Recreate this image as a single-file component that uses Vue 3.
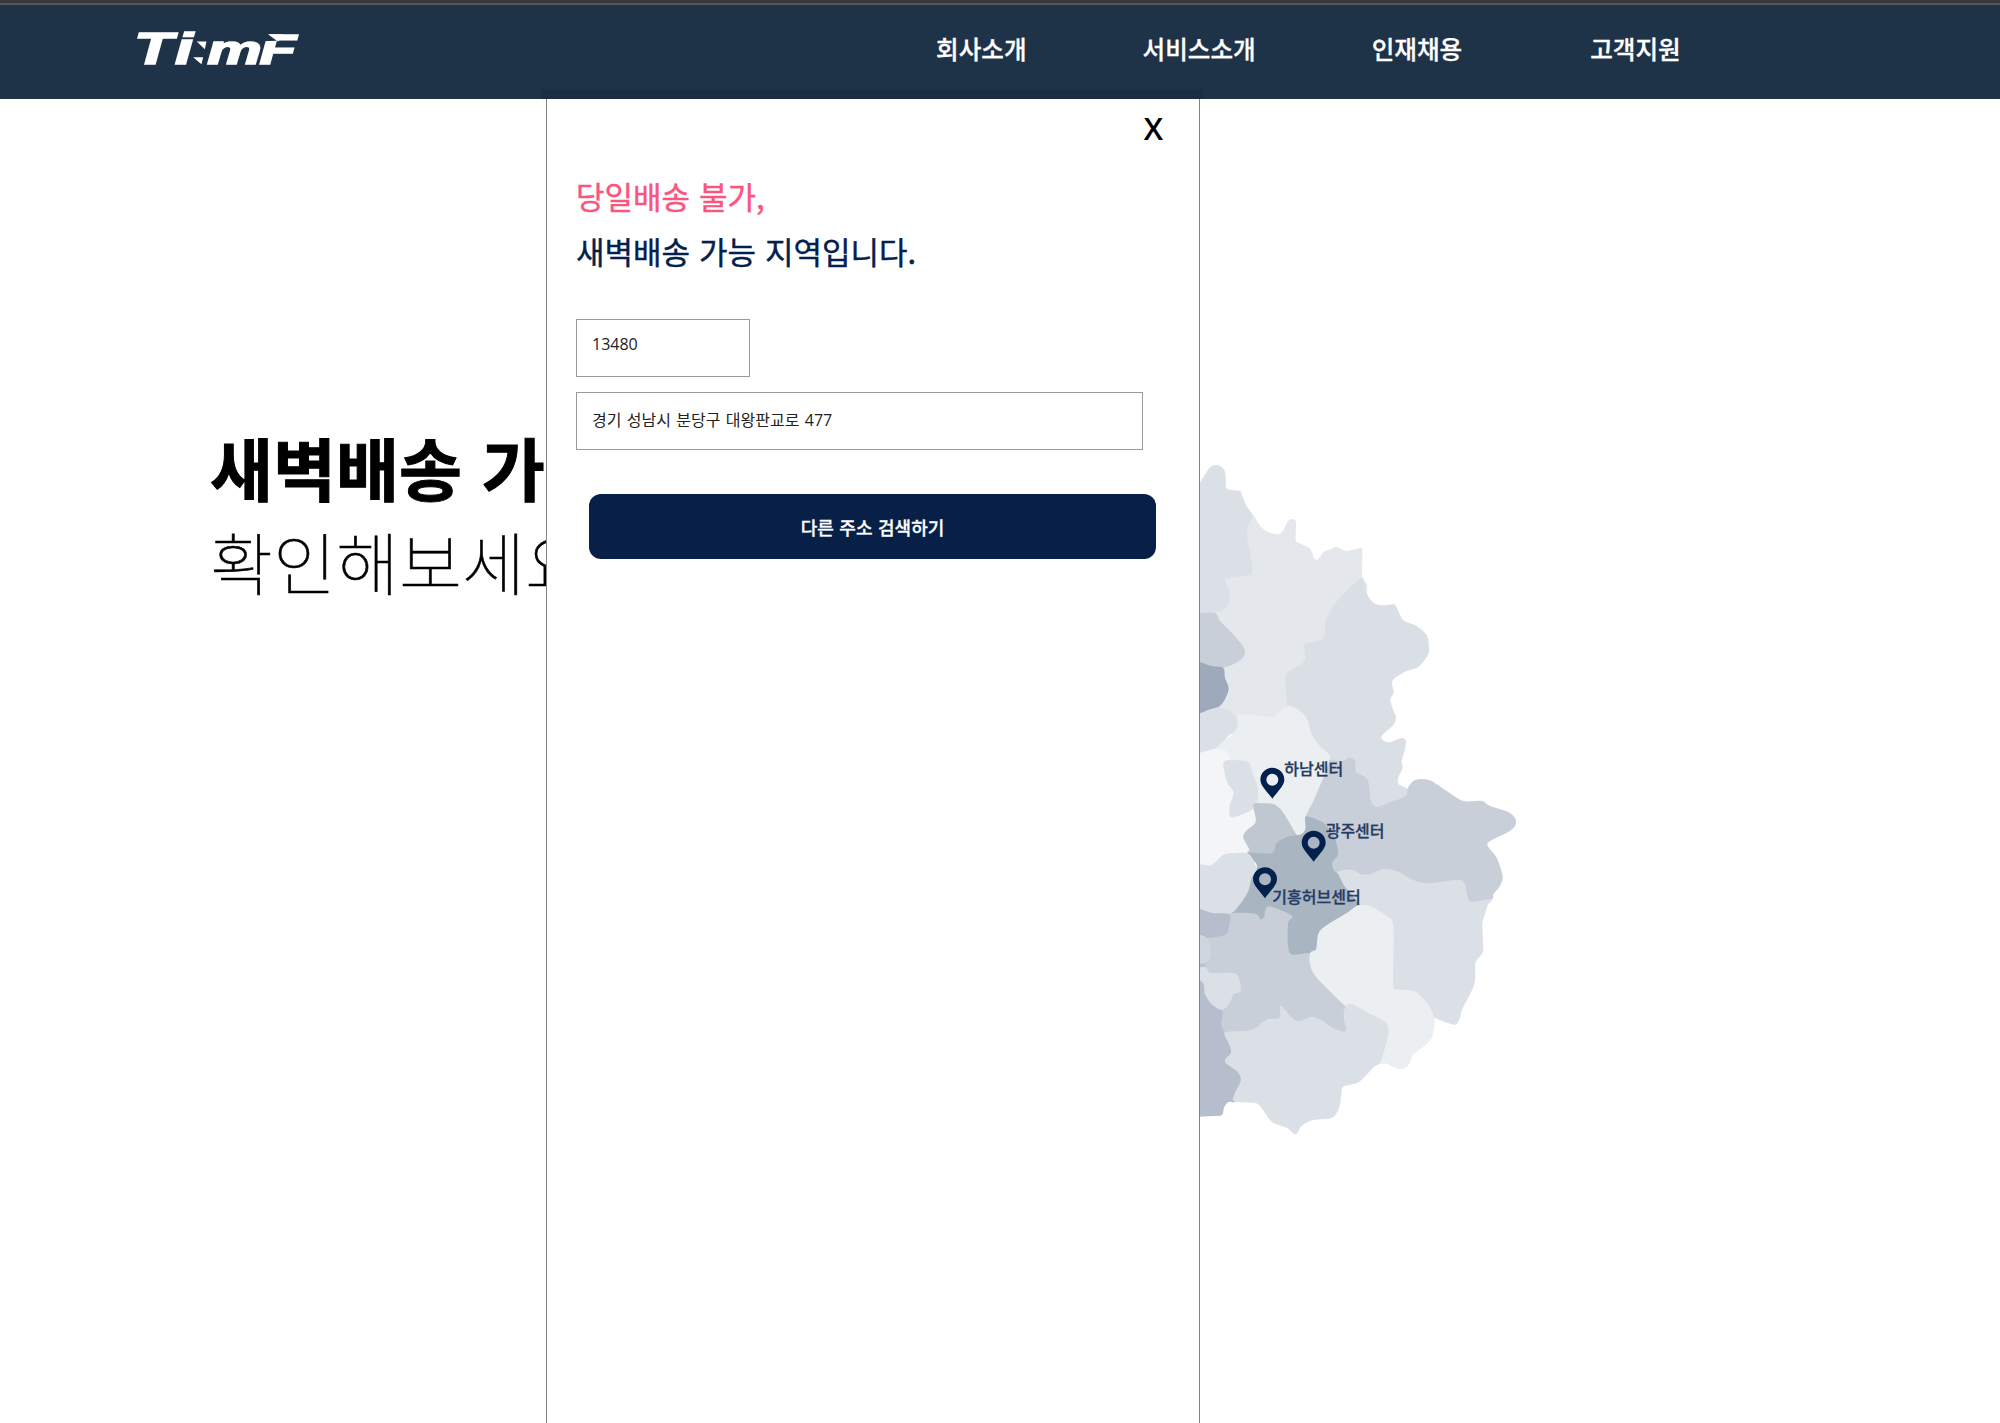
<script setup>
const menu = ['회사소개', '서비스소개', '인재채용', '고객지원']

// Closed Catmull-Rom outline through a flat list of x, y pairs
function outline(flat) {
  const p = []
  for (let i = 0; i < flat.length; i += 2) p.push([flat[i], flat[i + 1]])
  const n = p.length
  const k = 7
  let d = `M${p[0][0]} ${p[0][1]}`
  for (let i = 0; i < n; i++) {
    const a = p[(i - 1 + n) % n]
    const b = p[i]
    const c = p[(i + 1) % n]
    const e = p[(i + 2) % n]
    d += `C${(b[0] + (c[0] - a[0]) / k).toFixed(1)} ${(b[1] + (c[1] - a[1]) / k).toFixed(1)} ${(c[0] - (e[0] - b[0]) / k).toFixed(1)} ${(c[1] - (e[1] - b[1]) / k).toFixed(1)} ${c[0]} ${c[1]}`
  }
  return d + 'Z'
}

const regions = [
  { fill: '#dbe0e7', points: [20, 160, 60, 95, 78, 65, 95, 45, 115, 43, 132, 56, 137, 75, 138, 108, 148, 116, 180, 120, 187, 135, 200, 165, 222, 198, 230, 240, 230, 420, 150, 520, 20, 520] },
  { fill: '#e4e8ed', points: [220, 196, 235, 217, 250, 234, 270, 245, 295, 250, 308, 240, 325, 209, 338, 205, 348, 213, 347, 268, 358, 277, 385, 289, 397, 305, 400, 319, 409, 327, 420, 318, 432, 302, 455, 294, 468, 288, 500, 300, 540, 291, 547, 300, 547, 380, 560, 430, 480, 720, 400, 830, 100, 830, 100, 560, 104, 487, 128, 481, 147, 455, 149, 425, 136, 390, 142, 382, 205, 373, 216, 362, 214, 325, 201, 258, 204, 228] },
  { fill: '#dadfe6', points: [547, 380, 557, 420, 580, 455, 610, 463, 643, 460, 652, 475, 670, 508, 710, 525, 740, 552, 746, 580, 745, 610, 715, 648, 680, 660, 638, 688, 641, 725, 631, 745, 640, 778, 648, 800, 640, 822, 605, 855, 612, 870, 632, 873, 665, 861, 678, 870, 674, 900, 665, 930, 668, 950, 655, 980, 656, 1000, 680, 1012, 690, 1030, 640, 1110, 500, 1120, 400, 1000, 330, 820, 320, 740, 316, 685, 327, 660, 360, 642, 375, 625, 373, 583, 385, 576, 420, 568, 435, 550, 436, 515, 460, 465, 500, 420] },
  { fill: '#c8cfd9', points: [20, 480, 65, 485, 106, 487, 120, 510, 155, 545, 185, 580, 195, 600, 188, 620, 160, 640, 130, 650, 60, 660, 20, 660] },
  { fill: '#9eaabb', points: [20, 625, 60, 634, 95, 645, 130, 651, 135, 680, 146, 712, 135, 745, 115, 769, 85, 777, 60, 790, 20, 800] },
  { fill: '#c9cfd9', points: [485, 930, 510, 920, 526, 930, 528, 962, 550, 974, 566, 995, 573, 1050, 590, 1068, 620, 1058, 675, 1036, 684, 1010, 700, 990, 722, 984, 755, 990, 800, 1020, 850, 1050, 905, 1050, 930, 1065, 985, 1083, 1007, 1104, 1005, 1125, 985, 1143, 940, 1165, 922, 1182, 950, 1220, 968, 1275, 960, 1305, 940, 1330, 930, 1350, 820, 1400, 480, 1400, 400, 1260, 360, 1130, 370, 1090, 400, 1040, 425, 980, 440, 930] },
  { fill: '#dbe0e7', points: [470, 1270, 495, 1257, 520, 1257, 545, 1270, 575, 1268, 610, 1254, 650, 1260, 700, 1287, 745, 1297, 835, 1286, 855, 1300, 862, 1335, 875, 1352, 935, 1344, 923, 1363, 915, 1390, 907, 1420, 909, 1500, 887, 1534, 883, 1600, 847, 1675, 840, 1700, 830, 1720, 810, 1718, 764, 1700, 700, 1660, 600, 1600, 520, 1480, 480, 1350] },
  { fill: '#ebeff2', points: [175, 792, 245, 794, 280, 797, 322, 765, 360, 780, 382, 805, 395, 850, 420, 885, 448, 912, 447, 930, 432, 975, 400, 1050, 378, 1095, 374, 1140, 350, 1160, 220, 1110, 100, 1060, 90, 880, 145, 860, 172, 828] },
  { fill: '#dbe0e7', points: [20, 800, 60, 787, 115, 769, 150, 780, 170, 800, 171, 830, 140, 860, 105, 893, 60, 907, 20, 910] },
  { fill: '#f3f5f6', points: [20, 910, 60, 905, 120, 893, 150, 920, 200, 1060, 230, 1080, 230, 1140, 215, 1210, 100, 1250, 20, 1250] },
  { fill: '#dbe0e7', points: [132, 932, 185, 929, 208, 935, 219, 970, 234, 1015, 223, 1070, 155, 1099, 149, 1065, 161, 1025, 140, 990] },
  { fill: '#bfc7d1', points: [220, 1061, 250, 1057, 285, 1061, 310, 1085, 350, 1152, 370, 1180, 290, 1240, 205, 1210, 208, 1195, 190, 1160, 198, 1140, 227, 1112] },
  { fill: '#a9b5c1', points: [378, 1096, 430, 1115, 450, 1140, 466, 1165, 474, 1210, 457, 1235, 462, 1258, 475, 1270, 493, 1305, 540, 1365, 500, 1390, 420, 1440, 410, 1510, 330, 1525, 240, 1430, 120, 1400, 150, 1310, 230, 1250, 203, 1207, 275, 1207, 290, 1177, 320, 1158, 362, 1150, 377, 1133] },
  { fill: '#dbe0e7', points: [20, 1243, 60, 1240, 95, 1242, 125, 1215, 150, 1207, 203, 1207, 223, 1235, 230, 1260, 215, 1280, 205, 1320, 180, 1360, 150, 1390, 105, 1387, 60, 1373, 20, 1370] },
  { fill: '#c8cfd9', points: [150, 1389, 225, 1388, 242, 1405, 252, 1397, 258, 1372, 275, 1367, 337, 1395, 324, 1418, 330, 1507, 392, 1508, 405, 1560, 520, 1660, 500, 1740, 460, 1780, 130, 1800, 90, 1650, 70, 1460, 130, 1430] },
  { fill: '#ebeff2', points: [505, 1383, 535, 1363, 575, 1367, 620, 1395, 640, 1425, 640, 1600, 655, 1615, 705, 1622, 740, 1655, 763, 1700, 759, 1750, 740, 1780, 700, 1810, 690, 1836, 670, 1854, 650, 1852, 620, 1838, 590, 1830, 570, 1730, 498, 1667, 410, 1580, 390, 1540, 391, 1505, 408, 1495, 415, 1450, 440, 1423] },
  { fill: '#b6bdcc', points: [20, 1370, 60, 1374, 100, 1386, 148, 1390, 148, 1420, 138, 1450, 90, 1460, 20, 1460] },
  { fill: '#cfd6df', points: [20, 1455, 78, 1458, 92, 1508, 76, 1535, 20, 1540] },
  { fill: '#b6bdcc', points: [20, 1560, 60, 1580, 125, 1670, 124, 1720, 145, 1775, 170, 1850, 190, 1900, 170, 1951, 145, 1953, 132, 1970, 126, 1992, 100, 1995, 60, 1997, 20, 1998] },
  { fill: '#dbe0e7', points: [20, 1548, 75, 1549, 92, 1565, 165, 1567, 181, 1597, 181, 1622, 160, 1630, 150, 1655, 126, 1677, 95, 1660, 75, 1630, 68, 1595, 20, 1560] },
  { fill: '#dbe0e7', points: [133, 1750, 145, 1742, 215, 1736, 260, 1706, 298, 1700, 300, 1667, 310, 1670, 350, 1710, 395, 1697, 425, 1708, 460, 1732, 497, 1740, 491, 1700, 495, 1670, 515, 1659, 570, 1688, 618, 1715, 625, 1745, 615, 1790, 600, 1834, 580, 1850, 535, 1894, 490, 1907, 484, 1930, 478, 1970, 455, 2001, 400, 2007, 365, 2024, 347, 2050, 320, 2030, 275, 2012, 240, 1965, 222, 1956, 162, 1951, 165, 1925, 182, 1890, 175, 1865, 137, 1836, 138, 1822, 153, 1805, 150, 1785] }
].map((r) => ({ fill: r.fill, d: outline(r.points) }))

const centers = [
  { name: '하남센터', x: 277, y: 1043, tx: 313, ty: 971 },
  { name: '광주센터', x: 401, y: 1232, tx: 437, ty: 1158 },
  { name: '기흥허브센터', x: 255, y: 1342, tx: 277, ty: 1355 }
]
</script>

<template>
  <div class="page">
    <header class="header">
      <svg class="logo" viewBox="57 90 482 110" role="img" aria-label="TimF">
        <g class="logo-text">
          <text x="42" y="192" textLength="116" lengthAdjust="spacingAndGlyphs" font-size="134">T</text>
          <text x="165" y="192" textLength="54" lengthAdjust="spacingAndGlyphs" font-size="132">i</text>
          <text x="261" y="192" textLength="163" lengthAdjust="spacingAndGlyphs" font-size="124">m</text>
          <text x="418" y="192" textLength="110" lengthAdjust="spacingAndGlyphs" font-size="126">F</text>
        </g>
        <path class="notch" d="M420 97H439L470 122L420 123Z" />
        <path class="mark" d="M230 124H259L254 147ZM219 171H249L244 192ZM443 102H490L474 124Z" />
      </svg>
      <nav class="nav">
        <a v-for="item in menu" :key="item">{{ item }}</a>
      </nav>
    </header>

    <main class="main">
      <h1 class="hero"><strong>새벽배송 가</strong><span>확인해보세요</span></h1>

      <svg class="map" viewBox="0 0 1050 2100">
        <path v-for="(r, i) in regions" :key="i" :d="r.d" :fill="r.fill" />
        <path d="M40 1540L76 1537L75 1548L40 1550Z" fill="#b8c3cd" />
        <g v-for="c in centers" :key="c.name">
          <path
            class="pin"
            fill-rule="evenodd"
            :transform="`translate(${c.x} ${c.y})`"
            d="M0 0C-12 -18 -36 -38 -36 -57A36 36 0 0 1 36 -57C36 -38 12 -18 0 0ZM-18 -57A18 18 0 1 0 18 -57A18 18 0 1 0 -18 -57Z"
          />
          <text :x="c.tx" :y="c.ty">{{ c.name }}</text>
        </g>
      </svg>

      <section class="modal">
        <button class="close" type="button">X</button>
        <h2 class="result"><em>당일배송 불가,</em><span>새벽배송 가능 지역입니다.</span></h2>
        <div class="field zip">13480</div>
        <div class="field address">경기 성남시 분당구 대왕판교로 477</div>
        <button class="search" type="button">다른 주소 검색하기</button>
      </section>
    </main>
  </div>
</template>

<style>
body {
  background: #fff;
  overflow: hidden;
}
</style>

<style scoped>
.page {
  box-sizing: border-box;
  height: 1423px;
  overflow: hidden;
  display: flex;
  flex-direction: column;
  font-family: 'Noto Sans CJK KR', sans-serif;
  color: #000;
}
.header {
  position: relative;
  box-sizing: border-box;
  flex: none;
  height: 99px;
  display: flex;
  background: #1f3348;
  border-top: 3px solid #37383b;
  box-shadow: inset 0 2px #555658;
}
.header::after {
  content: '';
  position: absolute;
  left: 542px;
  width: 661px;
  bottom: 0;
  height: 13px;
  background: linear-gradient(rgba(25, 42, 64, 0), rgba(25, 42, 64, 0.7) 40%);
}
.logo {
  flex: none;
  width: 161px;
  height: 37px;
  margin: 27px 0 0 139px;
  overflow: visible;
}
.logo-text {
  font-family: 'Liberation Sans', sans-serif;
  font-weight: 700;
  font-style: italic;
  fill: #fff;
  stroke: #fff;
  stroke-width: 5;
}
.mark {
  fill: #fff;
}
.notch {
  fill: #1f3348;
}
.nav {
  display: flex;
  gap: 116px;
  margin: 27px 0 0 636px;
  color: #fff;
  font-size: 24.6px;
  font-weight: 500;
  line-height: 37px;
  white-space: nowrap;
  -webkit-text-stroke: 0.3px #fff;
}
.nav a:last-child {
  margin-left: 12px;
}
.main {
  position: relative;
  flex: 1;
  display: flex;
}
.hero {
  flex: none;
  width: 970px;
  margin: 321px 0 0 210px;
  font-size: 68.5px;
  line-height: 94px;
  font-weight: 100;
  white-space: nowrap;
}
.hero strong,
.hero span,
.result em,
.result span {
  display: block;
}
.hero strong {
  font-weight: 700;
  word-spacing: 4px;
  -webkit-text-stroke: 1px #000;
}
.hero span {
  -webkit-text-stroke: 0.6px #000;
}
.map {
  flex: none;
  width: 350px;
  height: 700px;
  margin-top: 352px;
}
.map text {
  font-size: 48px;
  font-weight: 500;
  fill: #243b64;
  stroke: #243b64;
  stroke-width: 0.8;
}
.pin {
  fill: #04204c;
}
.modal {
  position: absolute;
  box-sizing: border-box;
  top: 0;
  bottom: 0;
  left: 546px;
  width: 654px;
  padding: 0 30px 0 29px;
  display: flex;
  flex-direction: column;
  align-items: flex-start;
  background: #fff;
  border: solid #858585;
  border-width: 0 1px;
}
.close {
  align-self: flex-end;
  height: 44px;
  margin: 7px 6px 0 0;
  padding: 0;
  border: 0;
  background: none;
  font: 600 31px/44px 'Open Sans', sans-serif;
  color: #000;
}
.result {
  margin: 18px 0 0;
  font-size: 31px;
  font-weight: 400;
  line-height: 55px;
  color: #04204c;
  word-spacing: 2px;
  white-space: nowrap;
  -webkit-text-stroke: 0.4px currentColor;
}
.result em {
  font-style: normal;
  color: #f8557f;
}
.field {
  box-sizing: border-box;
  height: 58px;
  padding: 0 15px;
  border: 1px solid #9a9a9a;
  font-family: 'Open Sans', 'Noto Sans CJK KR', sans-serif;
  font-size: 16px;
  line-height: 54px;
  color: #222;
  word-spacing: 1.2px;
}
.zip {
  width: 174px;
  margin-top: 41px;
  line-height: 49px;
}
.address {
  width: 567px;
  margin-top: 15px;
}
.search {
  width: 567px;
  height: 65px;
  margin: 44px 0 0 13px;
  padding: 0;
  border: 0;
  border-radius: 12px;
  background: #082048;
  color: #fff;
  font: 500 18px/62px 'Noto Sans CJK KR', sans-serif;
  word-spacing: 1.5px;
  -webkit-text-stroke: 0.3px #fff;
}
</style>
